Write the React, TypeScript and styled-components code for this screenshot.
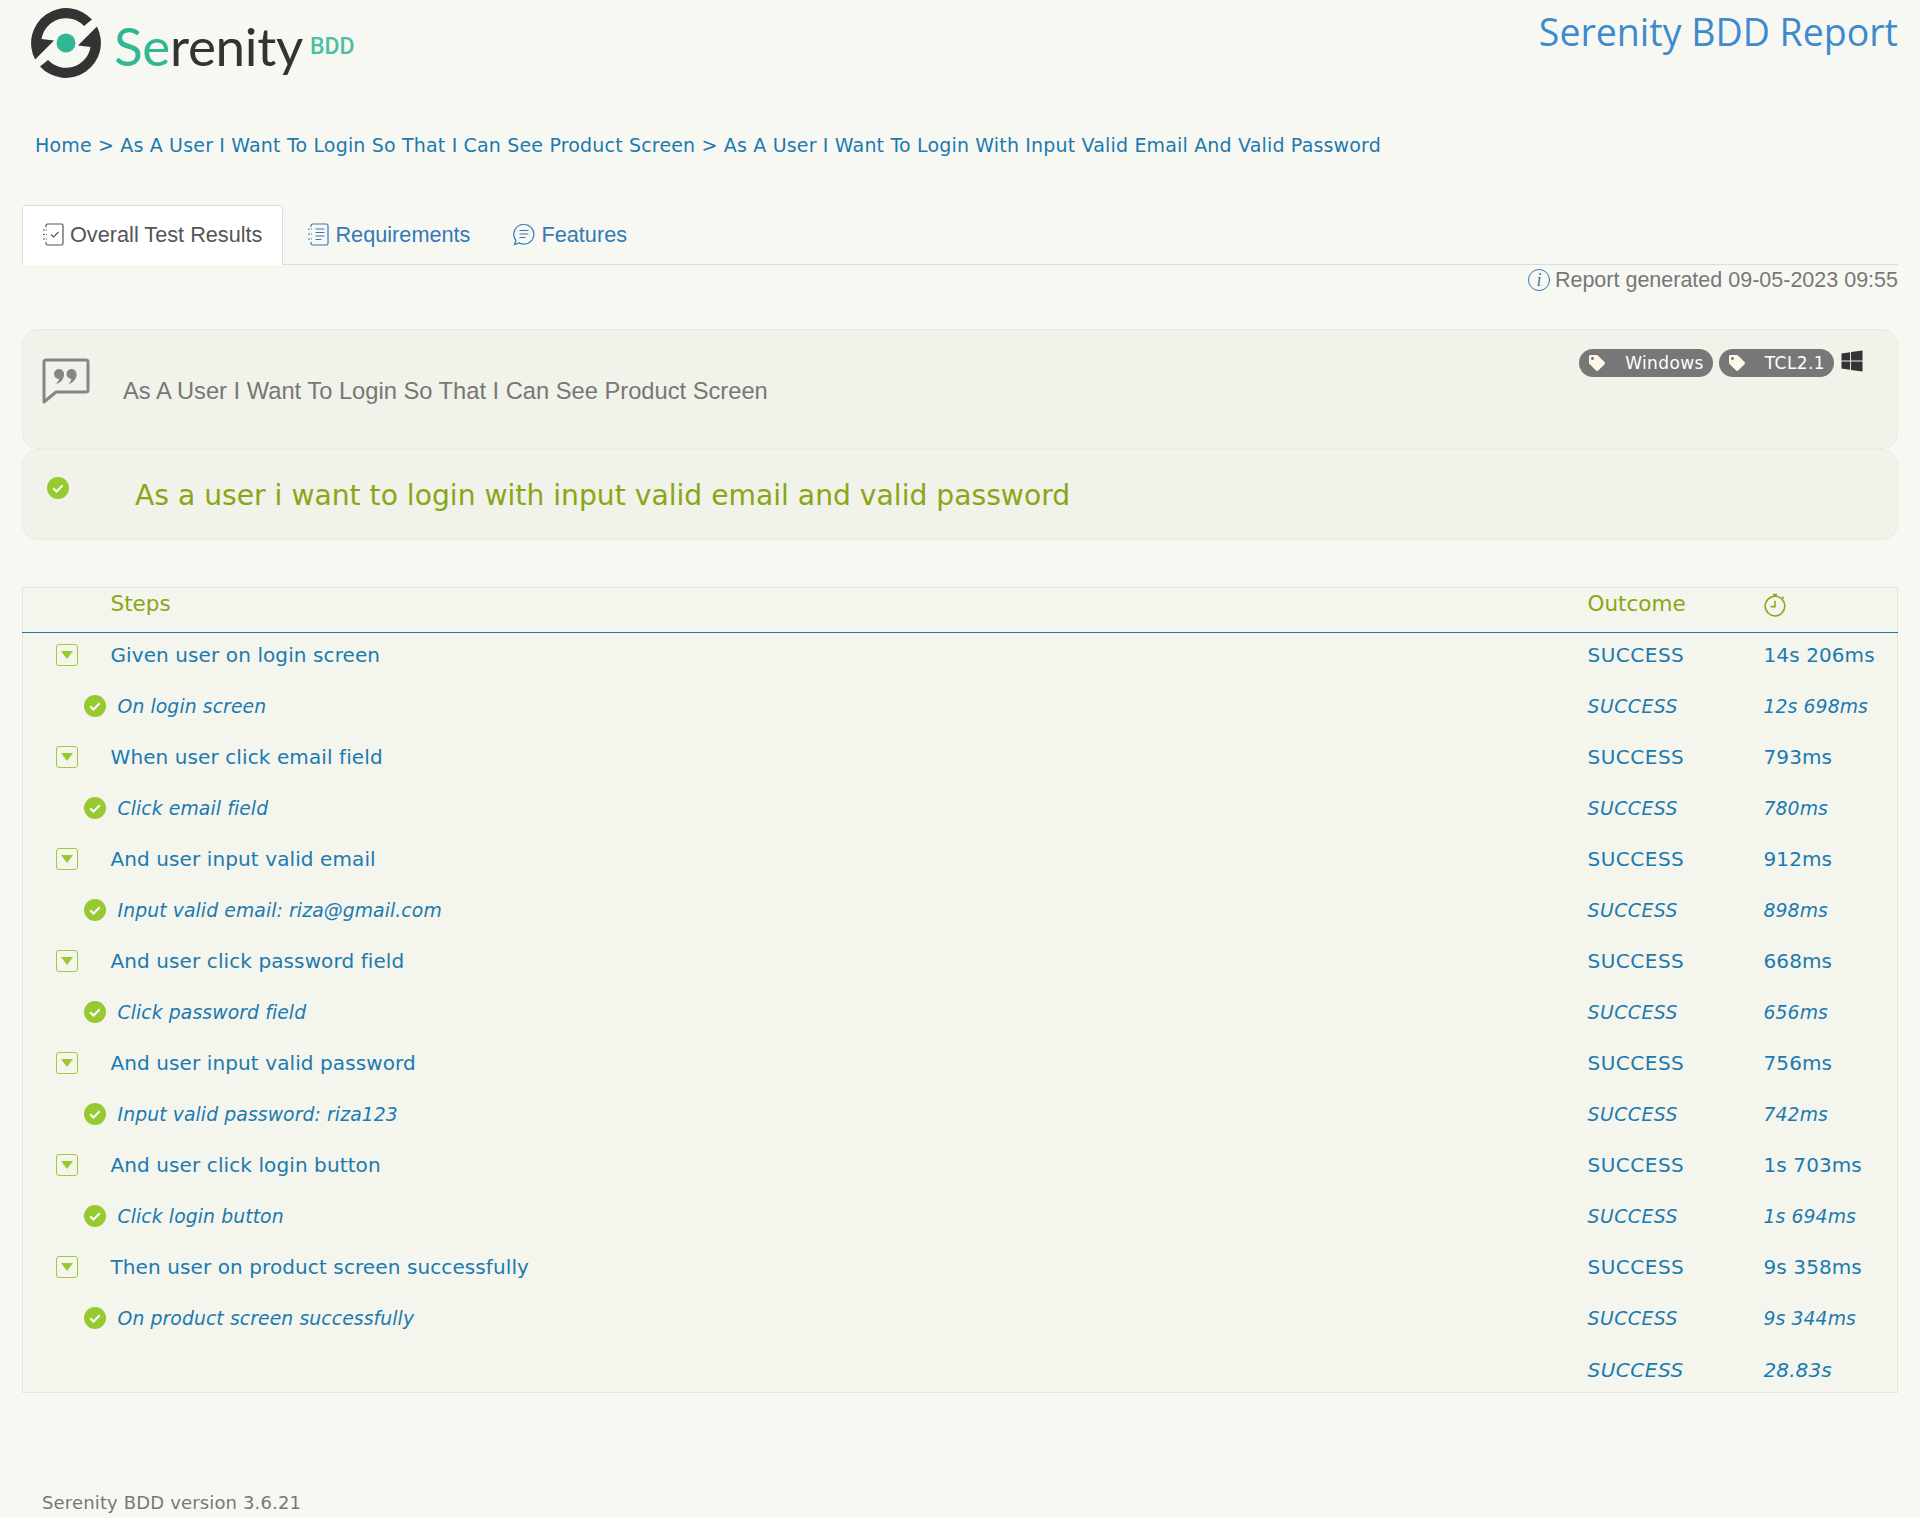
import { Fragment } from "react";
import styled, { createGlobalStyle } from "styled-components";
import { FaTag, FaWindows } from "react-icons/fa";

const GlobalStyle = createGlobalStyle`
  html, body {
    margin: 0;
    padding: 0;
    background: #f8f8f3;
  }
  body {
    font-family: "DejaVu Sans", Verdana, sans-serif;
  }
`;

const Page = styled.div`
  height: 1518px;
  overflow: hidden;
  padding: 0 22px;
  box-sizing: border-box;
`;

const Header = styled.header`
  display: flex;
  justify-content: space-between;
  height: 112px;
`;

const Logo = styled.div`
  display: flex;
  align-items: flex-start;
  padding: 7px 0 0 8px;
`;

const LogoWord = styled.div`
  font-family: "Lato", sans-serif;
  font-size: 53px;
  line-height: 60px;
  margin: 9px 0 0 12px;
  color: #333;
  letter-spacing: -0.3px;
`;

const LogoAccent = styled.span`
  color: #2fb893;
`;

const LogoSub = styled.span`
  font-family: "Roboto", sans-serif;
  font-size: 23px;
  font-weight: 500;
  color: #4cc0a0;
  margin: 26px 0 0 7px;
  letter-spacing: 0;
`;

const ReportTitle = styled.h1`
  margin: 8px 0 0;
  font-family: "Open Sans", sans-serif;
  font-weight: 400;
  font-size: 37.5px;
  line-height: 48px;
  color: #3d8bcd;
`;

const Breadcrumbs = styled.nav`
  padding-left: 13px;
  height: 93px;
  box-sizing: border-box;
  padding-top: 22px;
  font-size: 19px;
  line-height: 22px;
  letter-spacing: 0.17px;
  color: #1b7ab0;
`;

const Tabs = styled.div`
  display: flex;
  height: 60px;
  border-bottom: 1px solid #dcdcdc;
  box-sizing: border-box;
`;

const Tab = styled.div<{ $active?: boolean }>`
  display: flex;
  align-items: center;
  gap: 6px;
  height: 60px;
  box-sizing: border-box;
  padding: ${(p) => (p.$active ? "0 20px 2px 19px" : "0 18px 2px 23px")};
  font-family: "Liberation Sans", Arial, sans-serif;
  font-size: 21.7px;
  color: ${(p) => (p.$active ? "#555" : "#337ab7")};
  background: ${(p) => (p.$active ? "#fff" : "transparent")};
  border: 1px solid ${(p) => (p.$active ? "#dcdcdc" : "transparent")};
  border-bottom: none;
  border-radius: 5px 5px 0 0;
`;

const Generated = styled.div`
  display: flex;
  justify-content: flex-end;
  align-items: center;
  gap: 5px;
  height: 30px;
  font-family: "Liberation Sans", Arial, sans-serif;
  font-size: 21.5px;
  color: #777;
`;

const InfoMark = styled.span`
  width: 22px;
  height: 22px;
  box-sizing: border-box;
  border: 1.5px solid #337ab7;
  border-radius: 50%;
  display: flex;
  align-items: center;
  justify-content: center;
  font-family: "Liberation Serif", serif;
  font-style: italic;
  font-size: 18px;
  color: #337ab7;
`;

const Card = styled.section`
  background: #f1f2ea;
  border: 1px solid #ebebe5;
  border-radius: 16px;
  box-sizing: border-box;
`;

const StoryCard = styled(Card)`
  height: 120px;
  margin-top: 34px;
  padding: 28px 33px 0 19px;
  display: flex;
  align-items: flex-start;
`;

const StoryTitle = styled.div`
  font-family: "Liberation Sans", Arial, sans-serif;
  font-size: 23.7px;
  line-height: 28px;
  color: #777;
  margin: 19px 0 0 33px;
  flex: 1;
`;

const Tags = styled.div`
  display: flex;
  gap: 6px;
  margin-top: -9px;
`;

const Pill = styled.span`
  display: flex;
  align-items: center;
  height: 28px;
  box-sizing: border-box;
  padding: 0 9px 0 10px;
  gap: 20px;
  background: #777;
  border-radius: 14px;
  color: #fff;
  font-size: 17px;
  letter-spacing: 0.4px;
`;

const ScenarioCard = styled(Card)`
  height: 91px;
  padding: 27px 0 0 24px;
  display: flex;
  align-items: flex-start;
`;

const ScenarioTitle = styled.h2`
  margin: -5px 0 0 66px;
  font-weight: 400;
  font-size: 28.2px;
  line-height: 48px;
  color: #88a716;
`;

const StepsTable = styled.table`
  width: 100%;
  margin-top: 47px;
  border-collapse: collapse;
  table-layout: fixed;
  background: #f4f5ed;
  border: 1px solid #e6e6e0;
  font-size: 20px;
  color: #1b7ab0;
`;

const HeadCell = styled.th`
  height: 30px;
  padding: 0 0 14px;
  text-align: left;
  font-weight: 400;
  font-size: 21.5px;
  color: #88a716;
  border-bottom: 1.5px solid #1b7ab0;

  svg {
    display: block;
    margin-top: 3px;
  }
`;

const Row = styled.tr<{ $total?: boolean }>`
  height: ${(p) => (p.$total ? "46px" : "51px")};
`;

const Cell = styled.td<{ $sub?: boolean; $total?: boolean }>`
  padding: ${(p) => (p.$total ? "2px 0 0" : "0 0 6px")};
  font-size: ${(p) => (p.$total ? "20px" : p.$sub ? "18.8px" : "20px")};
  font-style: ${(p) => (p.$sub || p.$total ? "italic" : "normal")};
  letter-spacing: 0.1px;
  white-space: nowrap;
`;

const SubTitle = styled.div`
  display: flex;
  align-items: center;
  margin-left: -27px;
  gap: 12px;
`;

const ToggleBox = styled.span`
  display: flex;
  align-items: center;
  justify-content: center;
  width: 22px;
  height: 22px;
  margin-left: 33px;
  box-sizing: border-box;
  border: 1.5px solid #9ccc3c;
  border-radius: 3px;
  &::after {
    content: "";
    border-left: 6px solid transparent;
    border-right: 6px solid transparent;
    border-top: 8px solid #97c931;
  }
`;

const Outcome = styled.span`
  letter-spacing: 0.5px;
`;

const Footer = styled.footer`
  margin: 99px 0 0 20px;
  font-size: 18px;
  line-height: 22px;
  letter-spacing: 0.15px;
  color: #777;
`;

function LogoMark() {
  const arm = "M71 18.600 A35 35 0 0 0 14.100 58.400 L33 39.500 L20.500 38 A24.800 24.800 0 0 1 63 25 Z";
  return (
    <svg width="72" height="72" viewBox="9 6 72 72">
      <path d={arm} fill="#333" />
      <path d={arm} fill="#333" transform="rotate(180 45 42)" />
      <circle cx="45" cy="42" r="9.500" fill="#2fb893" />
    </svg>
  );
}

function CheckCircle() {
  return (
    <svg width="22" height="22" viewBox="0 0 22 22">
      <circle cx="11" cy="11" r="11" fill="#97c931" />
      <path d="M6.200 11.200l3.300 3.300 6.200-6.200" fill="none" stroke="#fff" strokeWidth="2" />
    </svg>
  );
}

function QuoteBubble() {
  return (
    <svg width="48" height="46" viewBox="0 0 48 46">
      <path
        d="M4 2h40a2 2 0 0 1 2 2v28a2 2 0 0 1-2 2H14L2 44V4a2 2 0 0 1 2-2z"
        fill="none"
        stroke="#868686"
        strokeWidth="3"
        strokeLinejoin="round"
      />
      <circle cx="17" cy="16" r="5" fill="#868686" />
      <path d="M22 16c0 5.500-3.500 9-8 10 2.200-2.200 3-4.500 3-6z" fill="#868686" />
      <circle cx="29.500" cy="16" r="5" fill="#868686" />
      <path d="M34.500 16c0 5.500-3.500 9-8 10 2.200-2.200 3-4.500 3-6z" fill="#868686" />
    </svg>
  );
}

function ChecklistIcon() {
  return (
    <svg width="22" height="23" viewBox="0 0 22 23" fill="none" stroke="#555" strokeWidth="1.200">
      <path d="M4 4V2.500A1.500 1.500 0 0 1 5.500 1h14A1.500 1.500 0 0 1 21 2.500v18a1.500 1.500 0 0 1-1.500 1.500h-14A1.500 1.500 0 0 1 4 20.500V19" />
      <path d="M1 7h4M1 11.500h4M1 16h4" strokeDasharray="2 1" />
      <path d="M9 11.500l2.500 2.500 5-5" />
    </svg>
  );
}

function NotebookIcon() {
  return (
    <svg width="22" height="23" viewBox="0 0 22 23" fill="none" stroke="#337ab7" strokeWidth="1.200">
      <path d="M4 4V2.500A1.500 1.500 0 0 1 5.500 1h14A1.500 1.500 0 0 1 21 2.500v18a1.500 1.500 0 0 1-1.500 1.500h-14A1.500 1.500 0 0 1 4 20.500V19" />
      <path d="M1 6h4M1 11h4M1 16h4" strokeDasharray="2 1" />
      <path d="M8.500 6h9M8.500 9.500h9M8.500 13h9M8.500 16.500h6" />
    </svg>
  );
}

function ChatIcon() {
  return (
    <svg width="22" height="23" viewBox="0 0 22 23" fill="none" stroke="#337ab7" strokeWidth="1.200">
      <path d="M11 1.500a9.800 9.800 0 1 1-4.500 18.500L1.500 21.500l1.500-4A9.800 9.800 0 0 1 11 1.500z" />
      <path d="M6.500 7.500h9M6.500 11h9M6.500 14.500h6" />
    </svg>
  );
}

function StopwatchIcon() {
  return (
    <svg width="22" height="24" viewBox="0 0 20 22" fill="none" stroke="#88a716" strokeWidth="1.400">
      <circle cx="10" cy="12" r="9" />
      <path d="M10 7v5.500H6M8 1.500h4M10 1.500V3M16.500 3.500l1.500 1.500" />
    </svg>
  );
}

const steps = [
  ["Given user on login screen", "14s 206ms", "On login screen", "12s 698ms"],
  ["When user click email field", "793ms", "Click email field", "780ms"],
  ["And user input valid email", "912ms", "Input valid email: riza@gmail.com", "898ms"],
  ["And user click password field", "668ms", "Click password field", "656ms"],
  ["And user input valid password", "756ms", "Input valid password: riza123", "742ms"],
  ["And user click login button", "1s 703ms", "Click login button", "1s 694ms"],
  ["Then user on product screen successfully", "9s 358ms", "On product screen successfully", "9s 344ms"],
];

function App() {
  return (
    <>
      <GlobalStyle />
      <Page>
        <Header>
          <Logo>
            <LogoMark />
            <LogoWord>
              <LogoAccent>Se</LogoAccent>renity
            </LogoWord>
            <LogoSub>BDD</LogoSub>
          </Logo>
          <ReportTitle>Serenity BDD Report</ReportTitle>
        </Header>

        <Breadcrumbs>
          Home &gt; As A User I Want To Login So That I Can See Product Screen &gt; As A User I Want
          To Login With Input Valid Email And Valid Password
        </Breadcrumbs>

        <Tabs>
          <Tab $active>
            <ChecklistIcon />
            Overall Test Results
          </Tab>
          <Tab>
            <NotebookIcon />
            Requirements
          </Tab>
          <Tab>
            <ChatIcon />
            Features
          </Tab>
        </Tabs>

        <Generated>
          <InfoMark>i</InfoMark>
          Report generated 09-05-2023 09:55
        </Generated>

        <StoryCard>
          <QuoteBubble />
          <StoryTitle>As A User I Want To Login So That I Can See Product Screen</StoryTitle>
          <Tags>
            <Pill>
              <FaTag color="#fff8e8" size={16} />
              Windows
            </Pill>
            <Pill>
              <FaTag color="#fff8e8" size={16} />
              TCL2.1
            </Pill>
            <FaWindows color="#333" size={24} />
          </Tags>
        </StoryCard>

        <ScenarioCard>
          <CheckCircle />
          <ScenarioTitle>As a user i want to login with input valid email and valid password</ScenarioTitle>
        </ScenarioCard>

        <StepsTable>
          <colgroup>
            <col style={{ width: 88 }} />
            <col />
            <col style={{ width: 176 }} />
            <col style={{ width: 134 }} />
          </colgroup>
          <thead>
            <tr>
              <HeadCell />
              <HeadCell>Steps</HeadCell>
              <HeadCell>Outcome</HeadCell>
              <HeadCell>
                <StopwatchIcon />
              </HeadCell>
            </tr>
          </thead>
          <tbody>
            {steps.map(([title, time, subTitle, subTime]) => (
              <Fragment key={title}>
                <Row>
                  <Cell>
                    <ToggleBox />
                  </Cell>
                  <Cell>{title}</Cell>
                  <Cell>
                    <Outcome>SUCCESS</Outcome>
                  </Cell>
                  <Cell>{time}</Cell>
                </Row>
                <Row>
                  <Cell />
                  <Cell $sub>
                    <SubTitle>
                      <CheckCircle />
                      {subTitle}
                    </SubTitle>
                  </Cell>
                  <Cell $sub>
                    <Outcome>SUCCESS</Outcome>
                  </Cell>
                  <Cell $sub>{subTime}</Cell>
                </Row>
              </Fragment>
            ))}
            <Row $total>
              <Cell $total />
              <Cell $total />
              <Cell $total>
                <Outcome>SUCCESS</Outcome>
              </Cell>
              <Cell $total>28.83s</Cell>
            </Row>
          </tbody>
        </StepsTable>

        <Footer>Serenity BDD version 3.6.21</Footer>
      </Page>
    </>
  );
}

export default App;
